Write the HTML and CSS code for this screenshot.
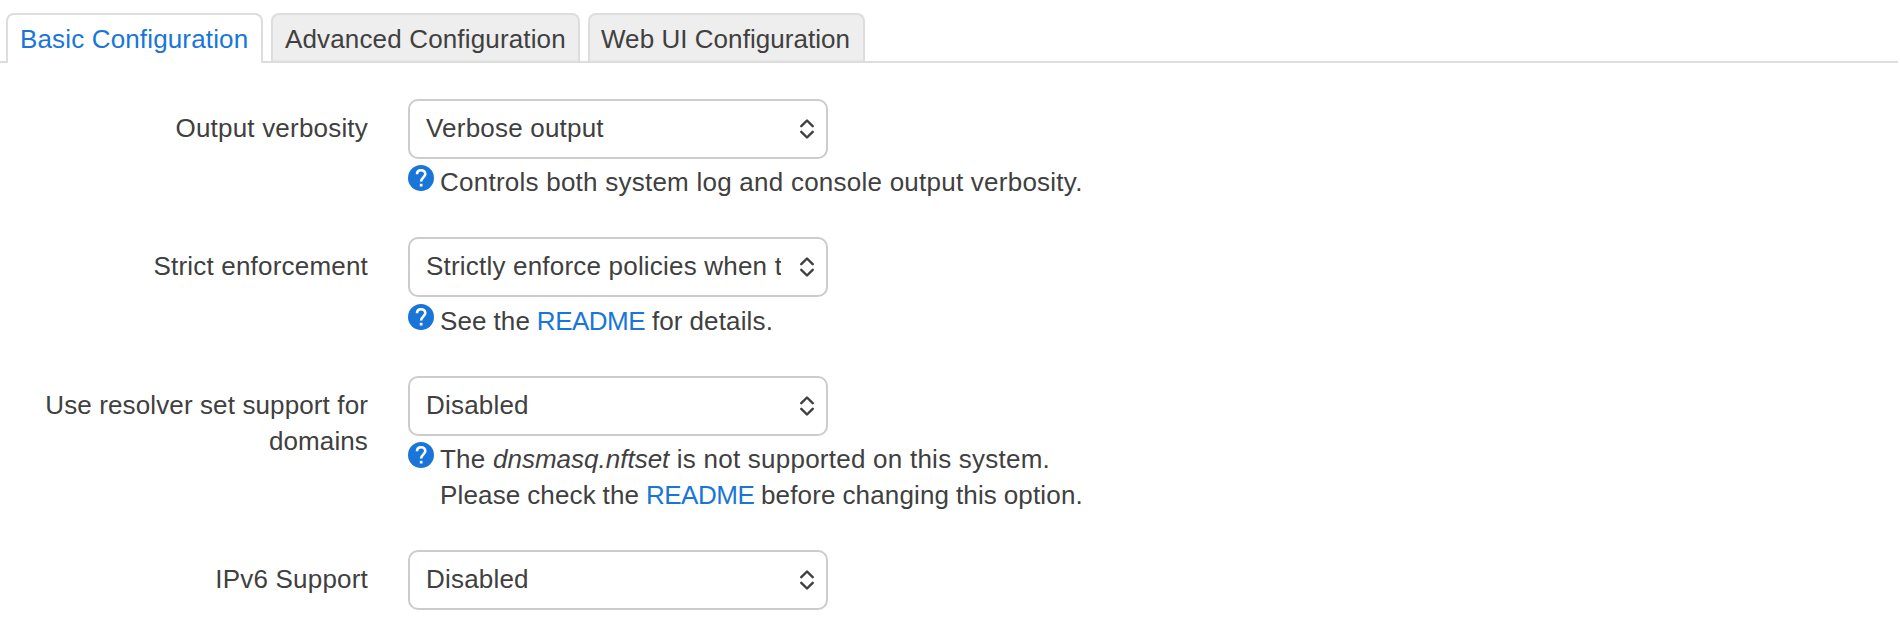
FILE: index.html
```html
<!DOCTYPE html>
<html lang="en">
<head>
    <meta charset="UTF-8">
    <meta name="viewport" content="width=device-width, initial-scale=1.0">
    <title>Basic Configuration</title>
    <link rel="stylesheet" href="styles.css">
</head>
<body>

<!-- Tabs -->
<ul class="tabs">
    <li class="tab tab-basic active"><a href="#">Basic Configuration</a></li>
    <li class="tab tab-advanced"><a href="#">Advanced Configuration</a></li>
    <li class="tab tab-webui"><a href="#">Web UI Configuration</a></li>
</ul>

<!-- Shared icons -->
<svg class="sprite" width="0" height="0">
    <symbol id="help" viewBox="0 0 26 26">
        <circle cx="13" cy="13" r="13" fill="#1976d8"/>
        <path d="M9 9.2C9 6.8 10.7 5.3 13.1 5.3s4.2 1.5 4.2 3.8c0 3.1-4.2 3.5-4.2 7.4" fill="none" stroke="#fff" stroke-width="2.6"/>
        <rect x="11.8" y="18.8" width="2.7" height="2.7" fill="#fff"/>
    </symbol>
    <symbol id="arrows" viewBox="0 0 14 20">
        <path d="M1.3 7.2L7 1.5l5.7 5.7M1.3 12.8L7 18.5l5.7-5.7" fill="none" stroke="#404040" stroke-width="2.4" stroke-linecap="round" stroke-linejoin="round"/>
    </symbol>
</svg>

<form class="options">
    <div class="option">
        <label for="verbosity">Output verbosity</label>
        <div class="field">
            <div class="select">
                <select id="verbosity"><option>Verbose output</option></select>
                <svg class="arrows"><use href="#arrows"/></svg>
            </div>
            <div class="description">
                <svg class="help"><use href="#help"/></svg>
                <div class="text">Controls both system log and console output verbosity.</div>
            </div>
        </div>
    </div>

    <div class="option">
        <label for="strict">Strict enforcement</label>
        <div class="field">
            <div class="select">
                <select id="strict"><option>Strictly enforce policies when their gateway is down</option></select>
                <svg class="arrows"><use href="#arrows"/></svg>
            </div>
            <div class="description">
                <svg class="help"><use href="#help"/></svg>
                <div class="text"><span class="readme">See the <a href="#">README</a> for details.</span></div>
            </div>
        </div>
    </div>

    <div class="option">
        <label class="long" for="resolver">Use resolver set support for domains</label>
        <div class="field">
            <div class="select">
                <select id="resolver"><option>Disabled</option></select>
                <svg class="arrows"><use href="#arrows"/></svg>
            </div>
            <div class="description">
                <svg class="help"><use href="#help"/></svg>
                <div class="text">The <em>dnsmasq.nftset</em> is not supported on this system.<br><span class="readme">Please check the <a href="#">README</a> before changing this option.</span></div>
            </div>
        </div>
    </div>

    <div class="option">
        <label for="ipv6">IPv6 Support</label>
        <div class="field">
            <div class="select">
                <select id="ipv6"><option>Disabled</option></select>
                <svg class="arrows"><use href="#arrows"/></svg>
            </div>
        </div>
    </div>
</form>

</body>
</html>
```
FILE: styles.css
```css
* {
    box-sizing: border-box;
}
body {
    margin: 0;
    overflow: hidden;
    background-color: #fff;
    color: #404040;
    font-family: "Liberation Sans", Arial, sans-serif;
    font-size: 26px;
    line-height: 36px;
    letter-spacing: 0.2px;
}
a {
    color: #1976d8;
    text-decoration: none;
}
.tabs {
    display: flex;
    gap: 8px;
    height: 63px;
    margin: 0 2px 0 0;
    padding: 13px 6px 0;
    border-bottom: 2px solid #ddd;
    list-style: none;
}
.tab {
    height: 48px;
    padding: 6px 0 0 12px;
    background: linear-gradient(#eee 44px, #e6e6e6 46px);
    border: 2px solid #ddd;
    border-bottom: none;
    border-radius: 8px 8px 0 0;
    white-space: nowrap;
}
.tab a {
    color: #404040;
}
.tab-basic {
    width: 257px;
    letter-spacing: 0.15px;
}
.tab-advanced {
    width: 309px;
    letter-spacing: 0.15px;
}
.tab-webui {
    width: 277px;
    padding-left: 11px;
    letter-spacing: 0.05px;
}
.tab.active {
    height: 50px;
    background: #fff;
}
.tab.active a {
    color: #1976d8;
}
.sprite {
    display: block;
}
.options {
    padding-top: 36px;
}
.option {
    display: grid;
    grid-template-columns: 368px 1fr;
    column-gap: 40px;
    margin-bottom: 37.1px;
}
.option label {
    padding: 11px 0 0 40px;
    text-align: right;
}
.option label.long {
    letter-spacing: 0.12px;
}
.select {
    position: relative;
    width: 420px;
    height: 60px;
}
select {
    display: block;
    width: 100%;
    height: 100%;
    padding: 0 45px 2px 16px;
    appearance: none;
    background-color: #fff;
    border: 2px solid #ccc;
    border-radius: 10px;
    color: #404040;
    font: inherit;
    letter-spacing: inherit;
}
.arrows {
    position: absolute;
    top: 20px;
    right: 14px;
    width: 14px;
    height: 20px;
    pointer-events: none;
}
.description {
    display: flex;
    gap: 6px;
    padding-top: 5.3px;
}
.description .text {
    letter-spacing: 0.24px;
}
.description .readme {
    letter-spacing: 0.15px;
    word-spacing: -0.6px;
}
.description a {
    letter-spacing: -0.5px;
}
.description em {
    letter-spacing: 0;
}
.help {
    width: 26px;
    height: 26px;
    margin-top: 1px;
}
```
